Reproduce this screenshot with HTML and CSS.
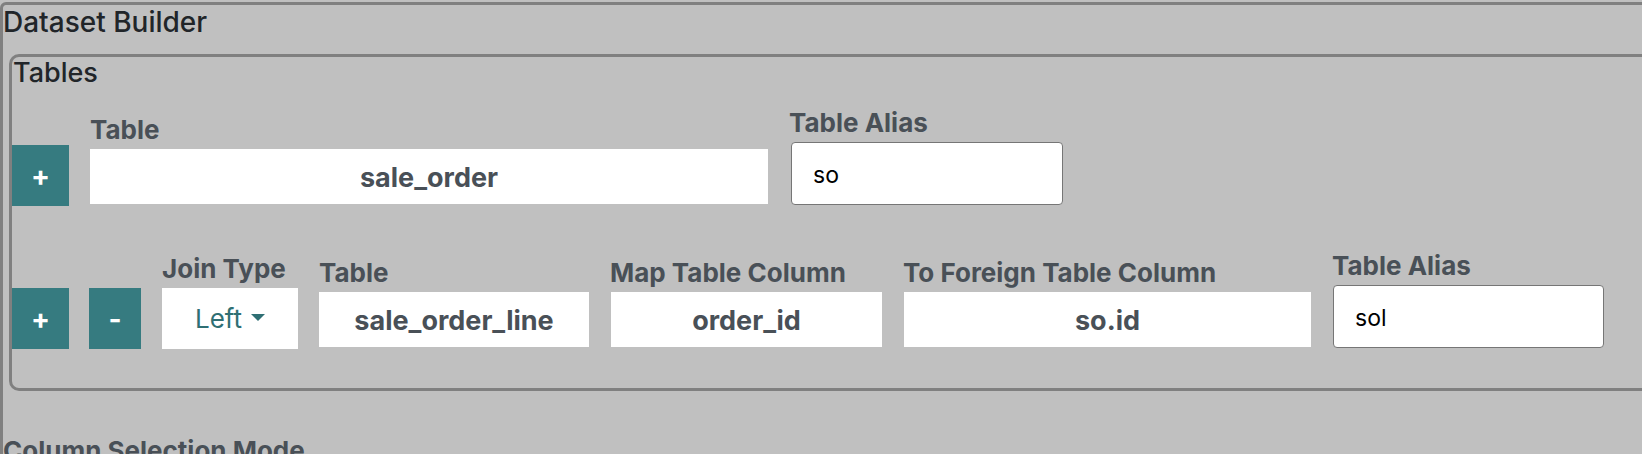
FILE: index.html
```
<!DOCTYPE html>
<html lang="en">

<head>
    <meta charset="UTF-8">
    <meta name="viewport" content="width=device-width, initial-scale=1.0">
    <title>Dataset Builder</title>
    <link rel="stylesheet" href="styles.css">
</head>

<body>
    <div class="builder">
        <div class="builder-title">Dataset Builder</div>

        <div class="tables">
            <div class="tables-title">Tables</div>

            <!-- base table -->
            <div class="table-row first">
                <button class="btn btn-add">+</button>
                <div class="field">
                    <label>Table</label>
                    <div class="value w-main">sale_order</div>
                </div>
                <div class="field">
                    <label>Table Alias</label>
                    <input class="alias" type="text" value="so">
                </div>
            </div>

            <!-- joined table -->
            <div class="table-row">
                <button class="btn btn-add">+</button>
                <button class="btn btn-remove">-</button>
                <div class="field">
                    <label>Join Type</label>
                    <div class="join-select">Left<span class="caret"></span></div>
                </div>
                <div class="field">
                    <label>Table</label>
                    <div class="value w-table">sale_order_line</div>
                </div>
                <div class="field">
                    <label>Map Table Column</label>
                    <div class="value w-map">order_id</div>
                </div>
                <div class="field">
                    <label>To Foreign Table Column</label>
                    <div class="value w-foreign">so.id</div>
                </div>
                <div class="field">
                    <label>Table Alias</label>
                    <input class="alias" type="text" value="sol">
                </div>
            </div>
        </div>

        <div class="section-title">Column Selection Mode</div>
    </div>
</body>

</html>
```

FILE: styles.css
```
html, body {
    overflow: hidden;
}
body {
    margin: 0;
    background: #c0c0c0;
    font-family: Inter, "Liberation Sans", sans-serif;
    color: #212529;
}
.builder {
    margin-top: 2px;
    margin-right: -80px;
    height: 600px;
    border: 3px solid #808080;
    border-radius: 6px;
}
.builder-title {
    font-size: 28px;
    line-height: 34px;
    font-weight: 500;
}
.tables {
    margin: 15px -80px 0 6px;
    padding-bottom: 39px;
    border: 3px solid #808080;
    border-radius: 10px;
}
.tables-title {
    font-size: 27px;
    line-height: 32px;
    font-weight: 500;
    padding-left: 1px;
}
.table-row {
    display: flex;
    align-items: flex-end;
    gap: 21px;
    margin-top: 45px;
}
.table-row.first {
    margin-top: 19px;
}
.table-row.first .alias {
    margin-left: 2px;
}
.btn {
    height: 61px;
    padding: 0;
    border: none;
    background: #367b80;
    color: #fff;
    font-family: Inter, "Liberation Sans", sans-serif;
    font-size: 28px;
    font-weight: 700;
}
.btn-add {
    width: 57px;
}
.btn-remove {
    width: 52px;
    margin-left: -1px;
}
.field {
    display: flex;
    flex-direction: column;
}
label {
    font-size: 26px;
    line-height: 29px;
    font-weight: 700;
    color: #495057;
    margin-bottom: 5px;
}
.value {
    height: 55px;
    margin-bottom: 2px;
    background: #fff;
    display: flex;
    align-items: center;
    justify-content: center;
    padding-top: 2px;
    box-sizing: border-box;
    font-size: 27px;
    font-weight: 700;
    color: #495057;
}
.w-main {
    width: 678px;
}
.w-table {
    width: 270px;
}
.w-map {
    width: 271px;
    margin-left: 1px;
}
.w-foreign {
    width: 407px;
    margin-left: 1px;
}
.join-select {
    width: 136px;
    height: 61px;
    background: #fff;
    display: flex;
    align-items: center;
    justify-content: center;
    font-size: 26px;
    color: #2f6f74;
}
.caret {
    margin: 0 0 3px 9px;
    border-top: 7px solid #2f6f74;
    border-left: 7px solid transparent;
    border-right: 7px solid transparent;
}
.alias {
    width: 272px;
    height: 63px;
    margin: 0 0 1px 0;
    padding: 3px 0 0 21px;
    box-sizing: border-box;
    border: 1px solid #767676;
    border-radius: 4px;
    background: #fff;
    font-family: Inter, "Liberation Sans", sans-serif;
    font-size: 23px;
    color: #000;
}
.table-row:not(.first) .alias {
    width: 271px;
    margin-left: 1px;
}
.section-title {
    margin-top: 45px;
    font-size: 26px;
    line-height: 29px;
    font-weight: 700;
    color: #495057;
}
```
